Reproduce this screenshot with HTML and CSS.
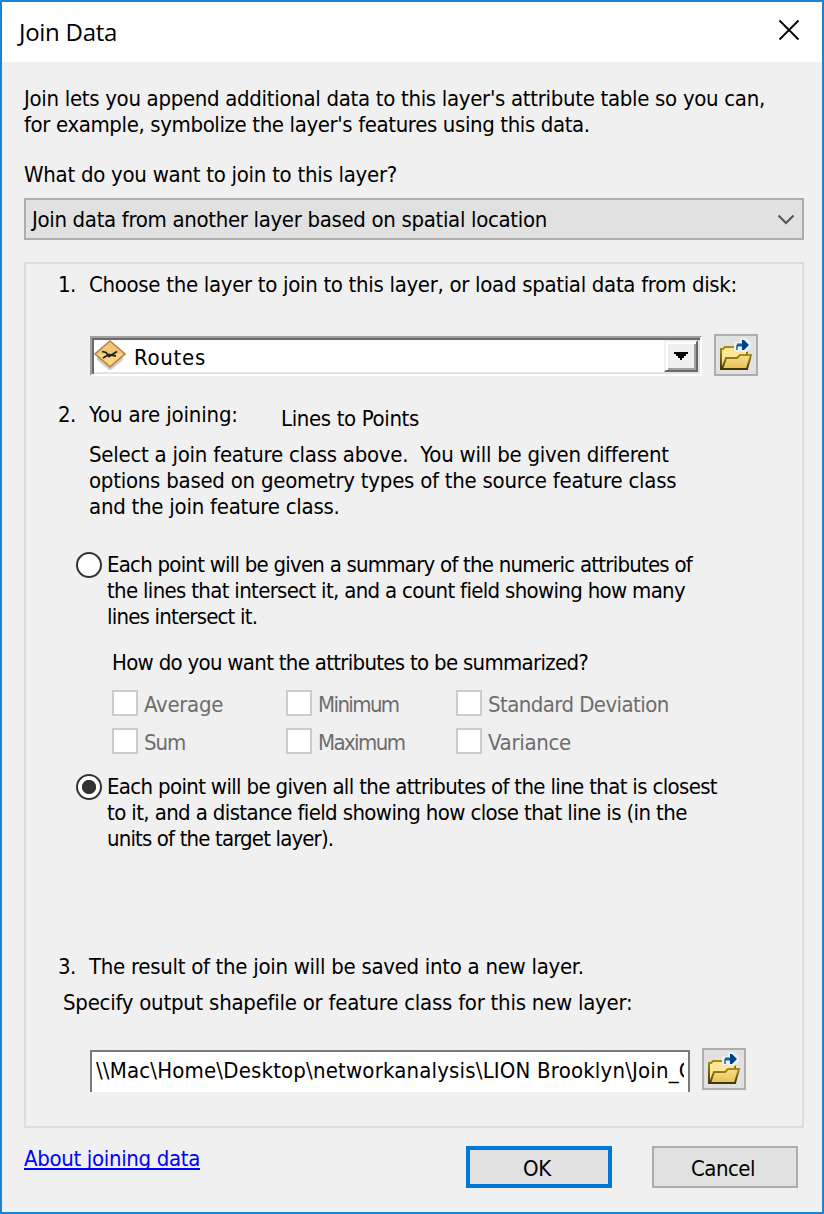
FILE: index.html
```html
<!DOCTYPE html>
<html lang="en">
<head>
<meta charset="utf-8">
<title>Join Data</title>
<link rel="stylesheet" href="styles.css">
</head>
<body>
<svg class="defs" width="0" height="0" aria-hidden="true">
  <defs>
    <linearGradient id="fold" x1="0" y1="0" x2="0" y2="1"><stop offset="0" stop-color="#f8e08c"/><stop offset="1" stop-color="#e5bf55"/></linearGradient>
    <linearGradient id="edge" x1="0" y1="0" x2="0" y2="1"><stop offset="0" stop-color="#a88a18"/><stop offset="1" stop-color="#453606"/></linearGradient>
    <symbol id="open-folder" viewBox="0 0 40 38">
      <path d="M5 33V13h2l2-2h9l2 2h11v20z" fill="#fbe795" stroke="url(#edge)" stroke-width="2"/>
      <path d="M6 33l4-11h11l3-3h11l-4 14z" fill="url(#fold)" stroke="url(#edge)" stroke-width="2"/>
      <path d="M4 32h28v2H4z" fill="#423506"/>
      <path d="M18 6h6V2h6l5 5v4l-4 5h-5l-2-1h-2l-2 1-2-2z" fill="#eef1f4"/>
      <path d="M20 9h2v5h-2z" fill="#3a8ccc"/>
      <path d="M21 7.500h6v3h-6z" fill="#1560a5"/>
      <path d="M26 4h2l5 5-5 5h-2z" fill="#004384"/>
    </symbol>
  </defs>
</svg>
<main class="dialog">
  <header class="titlebar">
    <h1 class="title">Join Data</h1>
    <svg class="close" viewBox="0 0 22 22"><path d="M1.500 1.500l19 19M20.500 1.500l-19 19"/></svg>
  </header>
  <section class="body">
    <div class="intro"><p>Join lets you append additional data to this layer's attribute table so you can,</p><p class="intro-end">for example, symbolize the layer's features using this data.</p></div>
    <p class="question">What do you want to join to this layer?</p>
    <div class="select"><span>Join data from another layer based on spatial location</span><svg viewBox="0 0 18 11"><path d="M1.500 1.500l7.500 7.500 7.500-7.500"/></svg></div>

    <section class="group">
      <div class="step first"><span class="num">1.</span><span class="choose">Choose the layer to join to this layer, or load spatial data from disk:</span></div>
      <div class="layer-row">
        <div class="combo">
          <svg class="layer-icon" viewBox="0 0 32 31">
            <path d="M3 17l13 9 13-9v3L17 30h-2L3 20z" fill="#cfcfcf"/>
            <path d="M16 1L31 14 16 27 1 14z" fill="#f2c578" stroke="#b78543" stroke-width="1.600"/>
            <path d="M16 13L29 14 16 25 4 14z" fill="#fbdf87" opacity=".65"/>
            <path d="M8 11.500l4 1 3 4 8-5M9 18l6-3.500 7 1.500" fill="none" stroke="#222" stroke-width="1.800"/>
          </svg>
          <span class="layer-name">Routes</span>
          <span class="drop"><svg viewBox="0 0 14 8"><path d="M0 0h14v2h-2v2h-2v2H8v2H6V6H4V4H2V2H0z"/></svg></span>
        </div>
        <button class="browse"><svg><use href="#open-folder"/></svg></button>
      </div>

      <div class="step second"><span class="num">2.</span><span class="joining">You are joining:</span><span class="kind">Lines to Points</span></div>
      <div class="desc"><p>Select a join feature class above.&nbsp; You will be given different</p><p>options based on geometry types of the source feature class</p><p>and the join feature class.</p></div>

      <div class="option summary">
        <span class="radio"></span>
        <div><p class="s1">Each point will be given a summary of the numeric attributes of</p><p class="s2">the lines that intersect it, and a count field showing how many</p><p class="s3">lines intersect it.</p></div>
      </div>
      <p class="how">How do you want the attributes to be summarized?</p>
      <div class="checks">
        <label><i></i><span class="average">Average</span></label>
        <label><i></i><span class="minimum">Minimum</span></label>
        <label><i></i><span class="deviation">Standard Deviation</span></label>
        <label><i></i><span class="sum">Sum</span></label>
        <label><i></i><span class="maximum">Maximum</span></label>
        <label><i></i><span>Variance</span></label>
      </div>
      <div class="option closest">
        <span class="radio on"></span>
        <div><p class="c1">Each point will be given all the attributes of the line that is closest</p><p class="c2">to it, and a distance field showing how close that line is (in the</p><p class="c3">units of the target layer).</p></div>
      </div>

      <div class="step third"><span class="num">3.</span><span>The result of the join will be saved into a new layer.</span></div>
      <p class="specify">Specify output shapefile or feature class for this new layer:</p>
      <div class="path-row">
        <div class="path"><span>\\Mac\Home\Desktop\networkanalysis\LION Brooklyn\Join_O</span></div>
        <button class="browse"><svg><use href="#open-folder"/></svg></button>
      </div>
    </section>

    <footer class="footer">
      <a class="about">About joining data</a>
      <button class="btn ok">OK</button>
      <button class="btn cancel">Cancel</button>
    </footer>
  </section>
</main>
</body>
</html>
```
FILE: styles.css
```css
* { box-sizing: border-box; margin: 0; padding: 0; }
body { font: 22px/26px "DejaVu Sans Condensed", "DejaVu Sans", sans-serif; letter-spacing: -.29px; color: #000; }
p, span, a { white-space: nowrap; }
button { font: inherit; letter-spacing: inherit; color: inherit; }
svg { display: block; }
.defs { position: absolute; }

.dialog { width: 824px; height: 1214px; border: 2px solid #1883d7; background: #f0f0f0; }
.titlebar { height: 60px; background: #fff; display: flex; justify-content: space-between; align-items: flex-start; padding: 13px 22px 0 17px; }
.title { font: 400 24px/34px "Open Sans", "Noto Sans", sans-serif; letter-spacing: -.28px; }
.close { width: 22px; height: 22px; margin-top: 4px; fill: none; stroke: #000; stroke-width: 1.800; }

.body { padding: 0 18px 0 22px; }
.intro { padding-top: 24px; letter-spacing: -.31px; }
.intro-end { letter-spacing: -.38px; }
.question { margin-top: 24px; letter-spacing: -.27px; }
.select { height: 42px; margin-top: 10px; border: 2px solid #adadad; background: #e1e1e1; display: flex; justify-content: space-between; align-items: center; padding: 0 7px 0 6px; letter-spacing: -.33px; }
.select span { padding-top: 2px; }
.select svg { width: 18px; height: 11px; fill: none; stroke: #555; stroke-width: 2; }

.group { height: 866px; margin-top: 22px; border: 2px solid #dcdcdc; padding-top: 8px; }
.step { display: flex; padding-left: 32px; }
.num { width: 31px; letter-spacing: -.5px; }
.choose { letter-spacing: -.31px; }
.layer-row { display: flex; gap: 12px; margin: 36px 0 0 64px; }
.combo { width: 612px; height: 40px; margin-top: 2px; display: flex; background: #fff; border: 2px solid; border-color: #a0a0a0 #fff #fff #a0a0a0; box-shadow: inset 2px 2px #696969, inset -2px -2px #e3e3e3; padding: 2px; }
.layer-icon { width: 32px; height: 31px; flex: none; }
.layer-name { margin: 5px auto 0 8px; letter-spacing: .72px; }
.drop { width: 34px; height: 32px; display: grid; place-items: center; background: #f0f0f0; border: 2px solid; border-color: #f0f0f0 #696969 #696969 #f0f0f0; box-shadow: inset 2px 2px #fff, inset -2px -2px #a0a0a0; }
.drop svg { width: 14px; height: 8px; }
.browse { width: 44px; height: 42px; border: 2px solid #adadad; background: #e1e1e1; flex: none; }
.browse svg { width: 40px; height: 38px; }

.second { margin-top: 26px; }
.joining { width: 192px; letter-spacing: -.15px; }
.kind { height: 26px; margin-bottom: -4px; padding-top: 4px; letter-spacing: -.36px; }
.desc { margin: 14px 0 0 63px; letter-spacing: -.25px; }

.option { display: flex; gap: 5px; padding-left: 50px; }
.radio { width: 26px; height: 26px; border: 2px solid #333; border-radius: 50%; background: #fff; flex: none; }
.radio.on { background: radial-gradient(circle, #333 6.700px, #fff 7.500px); }
.summary { margin-top: 32px; }
.s1 { letter-spacing: -.77px; }
.s2 { letter-spacing: -.68px; }
.s3 { letter-spacing: -.8px; }
.how { margin: 20px 0 0 86px; letter-spacing: -.7px; }
.checks { display: grid; grid-template-columns: 174px 170px 260px; row-gap: 12px; margin: 14px 0 0 86px; color: #6d6d6d; }
.checks label { display: flex; gap: 6px; height: 26px; }
.checks i { width: 26px; height: 26px; border: 2px solid #ccc; background: #fff; flex: none; }
.checks span { padding-top: 2px; }
.sum { letter-spacing: -1px; }
.minimum, .maximum { letter-spacing: -1.600px; }
.deviation { letter-spacing: -.57px; }
.closest { margin-top: 20px; }
.c1 { letter-spacing: -.66px; }
.c2 { letter-spacing: -.62px; }
.c3 { letter-spacing: -.85px; }

.third { margin-top: 102px; }
.specify { margin: 10px 0 0 37px; letter-spacing: -.25px; }
.path-row { display: flex; gap: 12px; margin: 32px 0 0 64px; }
.path { width: 600px; height: 42px; margin-top: 2px; border: 2px solid #7a7a7a; border-bottom: 0; background: #fff; padding: 6px 4px 0; }
.path span { display: block; overflow: hidden; letter-spacing: .18px; }

.footer { display: flex; align-items: flex-start; padding: 18px 6px 0 0; }
.about { color: #00f; height: 24px; line-height: 26px; margin-right: auto; border-bottom: 2px solid #00f; letter-spacing: -.33px; }
.btn { width: 146px; height: 42px; background: #e1e1e1; border: 2px solid #adadad; }
.ok { border: 4px solid #0078d7; margin-right: 40px; letter-spacing: -.2px; padding: 3px 4px 0 0; }
.cancel { letter-spacing: -.5px; padding: 3px 4px 0 0; }
```
